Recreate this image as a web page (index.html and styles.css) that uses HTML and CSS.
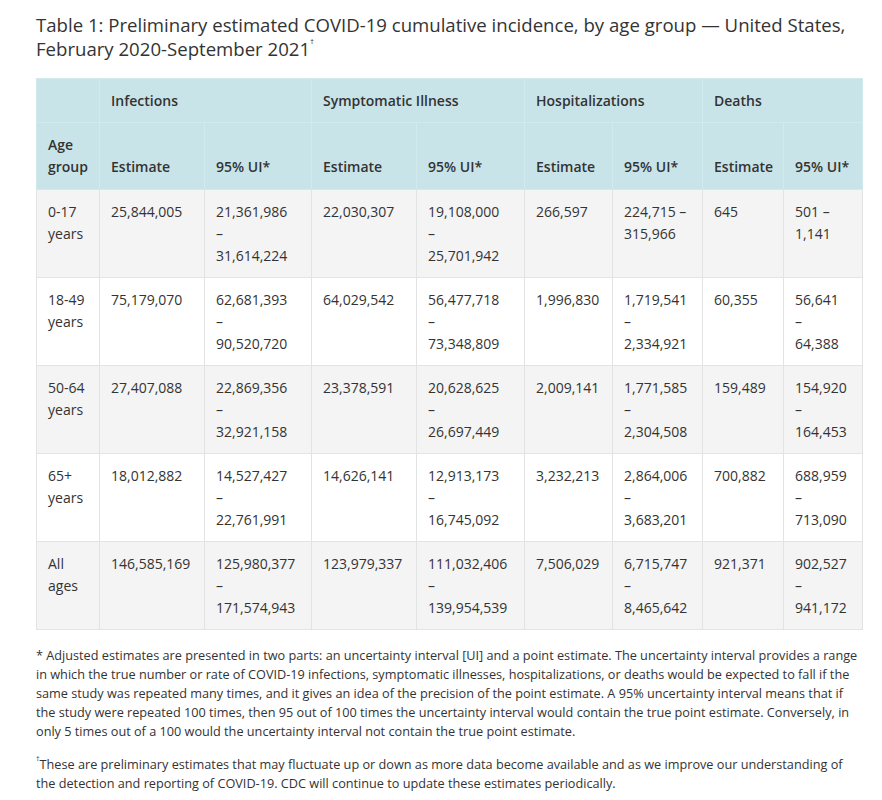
FILE: index.html
```html
<!DOCTYPE html>
<html>
<head>
<meta charset="utf-8">
<link rel="stylesheet" href="styles.css">
</head>
<body>
<div class="page">
  <h1 class="title">Table 1: Preliminary estimated COVID-19 cumulative incidence, by age group — United States, February 2020-September 2021<sup>†</sup></h1>
  <table class="data">
    <colgroup>
      <col class="c-age"><col class="c1"><col class="c2"><col class="c3"><col class="c4"><col class="c5"><col class="c6"><col class="c7"><col class="c8">
    </colgroup>
    <thead>
      <tr class="h1">
        <th></th>
        <th colspan="2">Infections</th>
        <th colspan="2">Symptomatic Illness</th>
        <th colspan="2">Hospitalizations</th>
        <th colspan="2">Deaths</th>
      </tr>
      <tr class="h2">
        <th>Age group</th>
        <th>Estimate</th><th>95% UI*</th>
        <th>Estimate</th><th>95% UI*</th>
        <th>Estimate</th><th>95% UI*</th>
        <th>Estimate</th><th>95% UI*</th>
      </tr>
    </thead>
    <tbody>
      <tr>
        <td>0-17 years</td><td>25,844,005</td><td>21,361,986<br>–<br>31,614,224</td><td>22,030,307</td><td>19,108,000<br>–<br>25,701,942</td><td>266,597</td><td>224,715 –<br>315,966</td><td>645</td><td>501 –<br>1,141</td>
      </tr>
      <tr>
        <td>18-49 years</td><td>75,179,070</td><td>62,681,393<br>–<br>90,520,720</td><td>64,029,542</td><td>56,477,718<br>–<br>73,348,809</td><td>1,996,830</td><td>1,719,541<br>–<br>2,334,921</td><td>60,355</td><td>56,641<br>–<br>64,388</td>
      </tr>
      <tr>
        <td>50-64 years</td><td>27,407,088</td><td>22,869,356<br>–<br>32,921,158</td><td>23,378,591</td><td>20,628,625<br>–<br>26,697,449</td><td>2,009,141</td><td>1,771,585<br>–<br>2,304,508</td><td>159,489</td><td>154,920<br>–<br>164,453</td>
      </tr>
      <tr>
        <td>65+ years</td><td>18,012,882</td><td>14,527,427<br>–<br>22,761,991</td><td>14,626,141</td><td>12,913,173<br>–<br>16,745,092</td><td>3,232,213</td><td>2,864,006<br>–<br>3,683,201</td><td>700,882</td><td>688,959<br>–<br>713,090</td>
      </tr>
      <tr>
        <td>All ages</td><td>146,585,169</td><td>125,980,377<br>–<br>171,574,943</td><td>123,979,337</td><td>111,032,406<br>–<br>139,954,539</td><td>7,506,029</td><td>6,715,747<br>–<br>8,465,642</td><td>921,371</td><td>902,527<br>–<br>941,172</td>
      </tr>
    </tbody>
  </table>
  <p class="note">* Adjusted estimates are presented in two parts: an uncertainty interval [UI] and a point estimate. The uncertainty interval provides a range in which the true number or rate of COVID-19 infections, symptomatic illnesses, hospitalizations, or deaths would be expected to fall if the same study was repeated many times, and it gives an idea of the precision of the point estimate. A 95% uncertainty interval means that if the study were repeated 100 times, then 95 out of 100 times the uncertainty interval would contain the true point estimate. Conversely, in only 5 times out of a 100 would the uncertainty interval not contain the true point estimate.</p>
  <p class="note"><span class="dag">†</span>These are preliminary estimates that may fluctuate up or down as more data become available and as we improve our understanding of the detection and reporting of COVID-19. CDC will continue to update these estimates periodically.</p>
</div>
</body>
</html>
```
FILE: styles.css
```css
html, body {
  margin: 0;
  padding: 0;
  background: #ffffff;
}
body {
  font-family: "Open Sans", "Liberation Sans", sans-serif;
  color: #333333;
}
.page {
  padding: 13px 10px 0 36px;
}
.title {
  margin: 0 0 17px 0;
  font-size: 18.6px;
  line-height: 24px;
  font-weight: 400;
  color: #333333;
}
.title sup {
  font-size: 8px;
  line-height: 0;
  vertical-align: top;
  position: relative;
  top: 4px;
}
.data {
  border-collapse: collapse;
  table-layout: fixed;
  width: 826px;
  font-size: 14px;
  line-height: 22px;
}
.c-age { width: 63px; }
.c1 { width: 105px; }
.c2 { width: 107px; }
.c3 { width: 105px; }
.c4 { width: 108px; }
.c5 { width: 88px; }
.c6 { width: 90px; }
.c7 { width: 81px; }
.c8 { width: 79px; }
.data th, .data td {
  padding: 11px 4px 10px 11px;
  text-align: left;
  border: 1px solid #e3e3e3;
}
.data th {
  background: #c9e4e9;
  font-weight: 600;
  vertical-align: bottom;
  border-color: #d2e9ed;
}
.data .h2 th {
  padding-bottom: 11px;
}
.data td {
  vertical-align: top;
}
.data tbody tr:nth-child(odd) td {
  background: #f4f4f4;
}
.data tbody tr:nth-child(even) td {
  background: #ffffff;
}
.note {
  margin: 14px 0 0 0;
  font-size: 12.7px;
  line-height: 19px;
  color: #333333;
  max-width: 826px;
}
.data + .note {
  margin-top: 16px;
}
.dag {
  font-size: 7px;
  line-height: 0;
  vertical-align: top;
  position: relative;
  top: 4px;
}
```
